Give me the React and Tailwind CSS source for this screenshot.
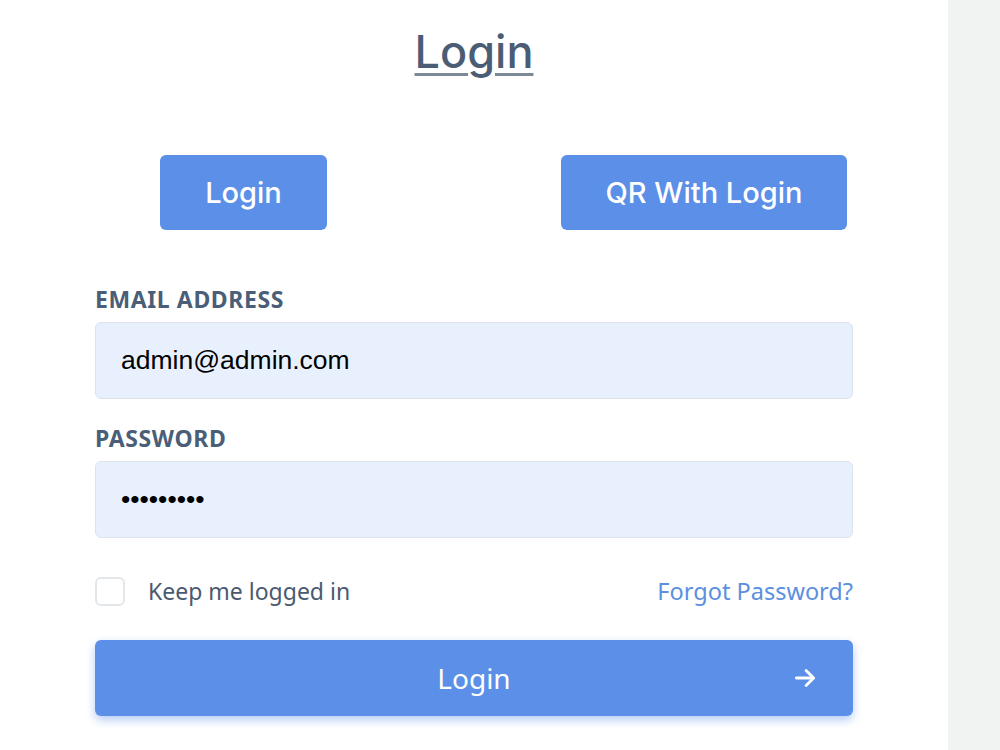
import React, { useState } from "react";

function ArrowRight() {
  return (
    <svg width="26" height="26" viewBox="0 0 24 24" fill="none" stroke="currentColor" strokeWidth="2.6" strokeLinecap="round" strokeLinejoin="round">
      <path d="M4 12h15" />
      <path d="M13 5l7 7-7 7" />
    </svg>
  );
}

export default function App() {
  const [email, setEmail] = useState("admin@admin.com");
  const [password, setPassword] = useState("123456789");
  const [keep, setKeep] = useState(false);

  return (
    <div className="flex h-[750px] w-[1000px] overflow-hidden bg-[#f1f2f2]">
      <div className="w-[948px] bg-white px-[95px] pt-[24px]" style={{ fontFamily: '"Noto Sans", sans-serif' }}>
        <h1
          className="text-center text-[45px] leading-[56px] font-medium text-[#4b5d75] underline decoration-[3px] underline-offset-[5px] decoration-[#7d8896]"
          style={{ fontFamily: 'Inter, sans-serif' }}
        >
          Login
        </h1>

        <div className="mt-[75px] flex justify-between pl-[65px] pr-[6px]">
          <button className="h-[75px] w-[167px] rounded-[6px] bg-[#5b8fe8] text-[29px] font-medium text-white" style={{ fontFamily: 'Inter, sans-serif' }}>
            Login
          </button>
          <button className="h-[75px] w-[286px] rounded-[6px] bg-[#5b8fe8] text-[29px] font-medium text-white" style={{ fontFamily: 'Inter, sans-serif' }}>
            QR With Login
          </button>
        </div>

        <form className="mt-[54px]" onSubmit={(e) => e.preventDefault()}>
          <label className="block text-[23px] leading-[30px] font-bold tracking-[0.6px] text-[#4a5e78]">
            EMAIL ADDRESS
          </label>
          <input
            type="email"
            value={email}
            onChange={(e) => setEmail(e.target.value)}
            className="mt-[8px] block h-[77px] w-full rounded-[6px] border border-[#dce3ec] bg-[#e8f0fe] px-[25px] text-[26.5px] text-black outline-none"
            style={{ fontFamily: '"Liberation Sans", Arial, sans-serif' }}
          />

          <label className="mt-[24px] block text-[23px] leading-[30px] font-bold tracking-[0.6px] text-[#4a5e78]">
            PASSWORD
          </label>
          <input
            type="password"
            value={password}
            onChange={(e) => setPassword(e.target.value)}
            className="mt-[8px] block h-[77px] w-full rounded-[6px] border border-[#dce3ec] bg-[#e8f0fe] px-[25px] text-[26.5px] text-black outline-none"
            style={{ fontFamily: '"Liberation Sans", Arial, sans-serif' }}
          />

          <div className="mt-[36px] flex items-center justify-between">
            <label className="flex items-center gap-[23px] text-[23px] text-[#4a5a70]">
              <span
                onClick={() => setKeep(!keep)}
                className={`h-[29px] w-[30px] rounded-[6px] border-2 ${keep ? "border-[#5b8fe8] bg-[#5b8fe8]" : "border-[#e4e7ea] bg-white"}`}
              />
              Keep me logged in
            </label>
            <a href="#" className="text-[23.5px] text-[#5b8fe0]">
              Forgot Password?
            </a>
          </div>

          <button
            type="submit"
            className="relative mt-[31px] flex h-[76px] w-full items-center justify-center rounded-[6px] bg-[#5b8fe8] text-[28px] text-white shadow-[0_4px_10px_rgba(91,143,232,0.45)]"
          >
            Login
            <span className="absolute right-[35px] top-1/2 -translate-y-1/2">
              <ArrowRight />
            </span>
          </button>
        </form>
      </div>
    </div>
  );
}
